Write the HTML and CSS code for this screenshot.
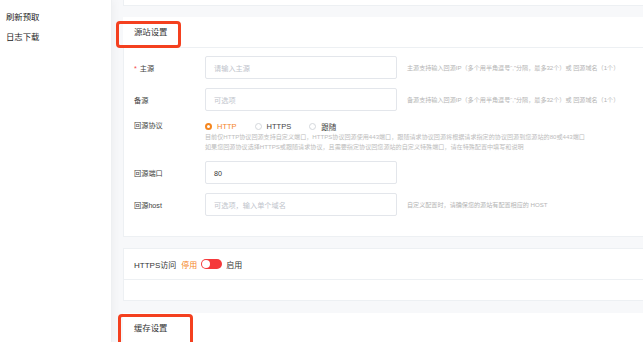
FILE: index.html
```html
<!DOCTYPE html>
<html lang="zh-CN">

<head>
    <meta charset="UTF-8">
    <meta name="viewport" content="width=device-width, initial-scale=1.0">
    <title>源站设置</title>
    <link rel="stylesheet" href="styles.css">
</head>

<body>
    <div class="layout">
        <!-- Side menu -->
        <aside class="sidebar">
            <div class="nav-item">刷新预取</div>
            <div class="nav-item">日志下载</div>
        </aside>

        <main class="main">
            <div class="card-top"></div>

            <!-- Origin settings -->
            <section class="section">
                <div class="section-title">
                    源站设置
                    <span class="mark mark-origin"></span>
                </div>

                <div class="panel form-panel">
                    <div class="form-row">
                        <label class="form-label"><span class="required">*</span>主源</label>
                        <div class="input placeholder">请输入主源</div>
                        <div class="help">主源支持输入回源IP（多个用半角逗号“,”分隔，最多32个）或 回源域名（1个）</div>
                    </div>
                    <div class="form-row">
                        <label class="form-label">备源</label>
                        <div class="input placeholder">可选项</div>
                        <div class="help">备源支持输入回源IP（多个用半角逗号“,”分隔，最多32个）或 回源域名（1个）</div>
                    </div>
                    <div class="form-row row-protocol">
                        <label class="form-label">回源协议</label>
                        <div class="protocol">
                            <div class="radio-group">
                                <span class="radio-option checked"><span class="radio"></span>HTTP</span>
                                <span class="radio-option"><span class="radio"></span>HTTPS</span>
                                <span class="radio-option"><span class="radio"></span>跟随</span>
                            </div>
                            <div class="note">目前仅HTTP协议回源支持自定义端口，HTTPS协议回源使用443端口，跟随请求协议回源将根据请求指定的协议回源到您源站的80或443端口</div>
                            <div class="note">如果您回源协议选择HTTPS或跟随请求协议，且需要指定协议回您源站的自定义特殊端口，请在特殊配置中填写和说明</div>
                        </div>
                    </div>
                    <div class="form-row">
                        <label class="form-label">回源端口</label>
                        <div class="input">80</div>
                    </div>
                    <div class="form-row">
                        <label class="form-label">回源host</label>
                        <div class="input placeholder">可选项，输入单个域名</div>
                        <div class="help">自定义配置时，请确保您的源站有配置相应的 HOST</div>
                    </div>
                </div>

                <div class="panel https-panel">
                    <div class="https-row">
                        <span>HTTPS访问</span>
                        <span class="state-off">停用</span>
                        <span class="switch"><span class="knob"></span></span>
                        <span>启用</span>
                    </div>
                    <div class="https-extra"></div>
                </div>
            </section>

            <!-- Cache settings -->
            <section class="section">
                <div class="section-title title-cache">
                    缓存设置
                    <span class="mark mark-cache"></span>
                </div>
            </section>
        </main>
    </div>
</body>

</html>
```

FILE: styles.css
```css
/* Page */
body {
    margin: 0;
    height: 342px;
    overflow: hidden;
    font-family: "Liberation Sans", "Noto Sans CJK SC", sans-serif;
    color: #333;
    background-color: #f7f8fa;
}

.layout {
    display: flex;
    height: 100%;
}

/* Side menu */
.sidebar {
    width: 112px;
    flex-shrink: 0;
    padding-top: 7px;
    background-color: #fff;
    border-right: 1px solid #eef0f2;
    box-shadow: 2px 0 8px rgba(0, 0, 0, 0.04);
    box-sizing: border-box;
}

.nav-item {
    padding-left: 6px;
    line-height: 20px;
    font-size: 8.4px;
    color: #222;
}

/* Main area */
.main {
    flex: 1;
    padding-left: 11px;
    margin-right: -30px;
}

.card-top {
    height: 5px;
    background-color: #fff;
    border: 1px solid #edf0f3;
    border-top: none;
    margin-bottom: 11px;
}

.section-title {
    position: relative;
    height: 30px;
    line-height: 31px;
    padding-left: 11px;
    font-size: 8.4px;
    background-color: #fff;
    border-bottom: 1px solid #edf0f3;
}

.title-cache {
    height: 40px;
    line-height: 31px;
    border-bottom: none;
}

/* Red highlight boxes */
.mark {
    position: absolute;
    border: 3.5px solid #f4401f;
    border-radius: 4px;
    box-sizing: border-box;
}

.mark-origin {
    left: -7px;
    top: 4px;
    width: 65px;
    height: 27px;
}

.mark-cache {
    left: -5px;
    top: 1px;
    width: 75px;
    height: 36px;
}

.panel {
    background-color: #fff;
    border: 1px solid #edf0f3;
}

/* Origin form */
.form-panel {
    border-top: none;
    padding: 8px 0 20px 10px;
}

.form-row {
    display: grid;
    grid-template-columns: 61px 192px auto;
    column-gap: 10px;
    align-items: center;
    margin-bottom: 9px;
}

.form-row:last-child {
    margin-bottom: 0;
}

.form-label {
    font-size: 7.2px;
    color: #444;
}

.required {
    color: #f5474c;
    margin-right: 3px;
}

.input {
    height: 23px;
    line-height: 23px;
    padding-left: 8px;
    font-size: 7.2px;
    color: #333;
    border: 1px solid #e3e6eb;
    border-radius: 2px;
    box-sizing: border-box;
}

.input.placeholder {
    color: #c0c4cc;
}

.help {
    font-size: 6.1px;
    color: #b4b4b4;
    white-space: nowrap;
}

/* Protocol row */
.row-protocol {
    align-items: start;
    margin-top: 9px;
    margin-bottom: 10px;
}

.row-protocol .form-label {
    line-height: 12px;
}

.protocol {
    grid-column: 2 / 4;
}

.radio-group {
    display: flex;
    align-items: center;
    height: 12px;
}

.radio-option {
    display: inline-flex;
    align-items: center;
    gap: 5px;
    margin-right: 18px;
    font-size: 7.5px;
    color: #444;
}

.radio {
    width: 7px;
    height: 7px;
    border: 1px solid #d4d7dc;
    border-radius: 50%;
    box-sizing: border-box;
}

.radio-option.checked {
    color: #f5861f;
}

.radio-option.checked .radio {
    border: 2px solid #f5861f;
    background-color: #fff;
}

.note {
    font-size: 6.1px;
    line-height: 9.5px;
    color: #bdbdbd;
    white-space: nowrap;
}

/* HTTPS access */
.https-panel {
    margin-top: 11px;
    margin-bottom: 12px;
}

.https-row {
    display: flex;
    align-items: center;
    gap: 4px;
    height: 30px;
    padding-left: 10px;
    font-size: 8px;
    color: #333;
    border-bottom: 1px solid #edf0f3;
}

.https-row span:first-child {
    margin-right: 1px;
}

.state-off {
    color: #f5861f;
}

.switch {
    position: relative;
    width: 21px;
    height: 10px;
    border-radius: 5px;
    background-color: #f5393b;
}

.knob {
    position: absolute;
    left: 1px;
    top: 1px;
    width: 8px;
    height: 8px;
    border-radius: 50%;
    background-color: #fff;
}

.https-extra {
    height: 20px;
}
```
